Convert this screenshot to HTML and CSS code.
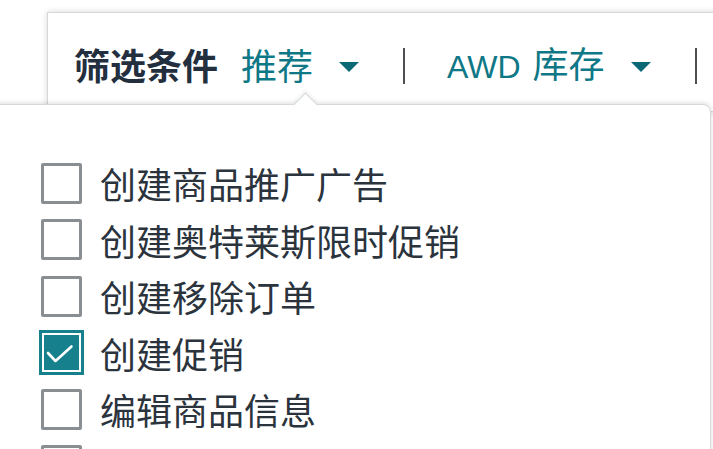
FILE: index.html
```html
<!DOCTYPE html>
<html lang="zh-CN">
<head>
<meta charset="utf-8">
<title>筛选条件</title>
<link rel="stylesheet" href="styles.css">
</head>
<body>
<div class="page">
  <div class="filterbar">
    <span class="label">筛选条件</span>
    <span class="link first">推荐</span>
    <span class="caret"></span>
    <span class="sep"></span>
    <span class="link second"><span class="latin">AWD</span>库存</span>
    <span class="caret"></span>
    <span class="sep"></span>
  </div>

  <div class="popover">
    <span class="arrow"></span>
    <ul class="options">
      <li class="option"><span class="cb"></span><span class="opt-text">创建商品推广广告</span></li>
      <li class="option"><span class="cb"></span><span class="opt-text">创建奥特莱斯限时促销</span></li>
      <li class="option"><span class="cb"></span><span class="opt-text">创建移除订单</span></li>
      <li class="option"><span class="cb checked"><span class="cb-fill"><svg class="tick" viewBox="0 0 35 35" width="35" height="35"><polyline points="4,18 11.5,26 27.5,11.5" fill="none" stroke="#ffffff" stroke-width="2.6" stroke-linecap="round" stroke-linejoin="round"/></svg></span></span><span class="opt-text">创建促销</span></li>
      <li class="option"><span class="cb"></span><span class="opt-text">编辑商品信息</span></li>
      <li class="option"><span class="cb"></span></li>
    </ul>
  </div>
</div>
</body>
</html>
```

FILE: styles.css
```css
html, body {
  margin: 0;
  padding: 0;
  background: #ffffff;
}

body {
  width: 713px;
  height: 449px;
  overflow: hidden;
  font-family: "Noto Sans CJK SC", "Liberation Sans", sans-serif;
}

.page {
  position: relative;
  width: 713px;
  height: 449px;
  overflow: hidden;
}

.filterbar {
  margin-top: 12px;
  margin-left: 47px;
  width: 760px;
  height: 100px;
  box-sizing: border-box;
  padding: 4px 0 0 26px;
  border: 1px solid #d5d9d9;
  border-right: none;
  box-shadow: 0 0 6px rgba(0, 0, 0, 0.16);
  display: flex;
  align-items: center;
  font-size: 36px;
  line-height: 36px;
  white-space: nowrap;
}

.label {
  font-weight: 700;
  color: #232f3e;
}

.link {
  color: #0e7886;
}

.link.first {
  margin-left: 23px;
}

.link.second {
  margin-left: 42px;
}

.latin {
  font-family: "Liberation Sans", sans-serif;
  font-size: 32px;
  margin-right: 12px;
}

.caret {
  width: 0;
  height: 0;
  margin-left: 26px;
  margin-top: 6px;
  border-left: 10px solid transparent;
  border-right: 10px solid transparent;
  border-top: 10px solid #0b6875;
}

.sep {
  width: 2px;
  height: 36px;
  margin-left: 44px;
  margin-top: 4px;
  background: #4d4f52;
}

.popover {
  position: absolute;
  left: -20px;
  top: 104px;
  width: 731px;
  height: 400px;
  box-sizing: border-box;
  background: #ffffff;
  border: 1px solid #d5d9d9;
  border-radius: 8px;
  box-shadow: 0 -1px 5px rgba(0, 0, 0, 0.13);
}

.arrow {
  position: absolute;
  left: 316px;
  top: -9px;
  width: 16px;
  height: 16px;
  background: #ffffff;
  border-top: 1px solid #d5d9d9;
  border-left: 1px solid #d5d9d9;
  transform: rotate(45deg);
  box-shadow: -2px -2px 3px rgba(0, 0, 0, 0.06);
}

.options {
  list-style: none;
  margin: 0;
  padding: 50px 0 0 60px;
}

.option {
  display: flex;
  align-items: center;
  height: 56.5px;
}

.cb {
  flex: none;
  width: 41px;
  height: 41px;
  box-sizing: border-box;
  border: 3px solid #898e93;
  border-radius: 2px;
  background: #ffffff;
  display: flex;
  align-items: center;
  justify-content: center;
}

.cb.checked {
  width: 45px;
  height: 45px;
  margin: -2px -2px -2px -2px;
  border: 3px solid #17808d;
  border-radius: 0;
  background: #ffffff;
  padding: 2px;
}

.cb-fill {
  display: flex;
  align-items: center;
  justify-content: center;
  width: 35px;
  height: 35px;
  background: #17808d;
}

.tick {
  display: block;
}

.opt-text {
  margin-left: 18px;
  font-size: 36px;
  line-height: 40px;
  color: #2b333d;
}
```
